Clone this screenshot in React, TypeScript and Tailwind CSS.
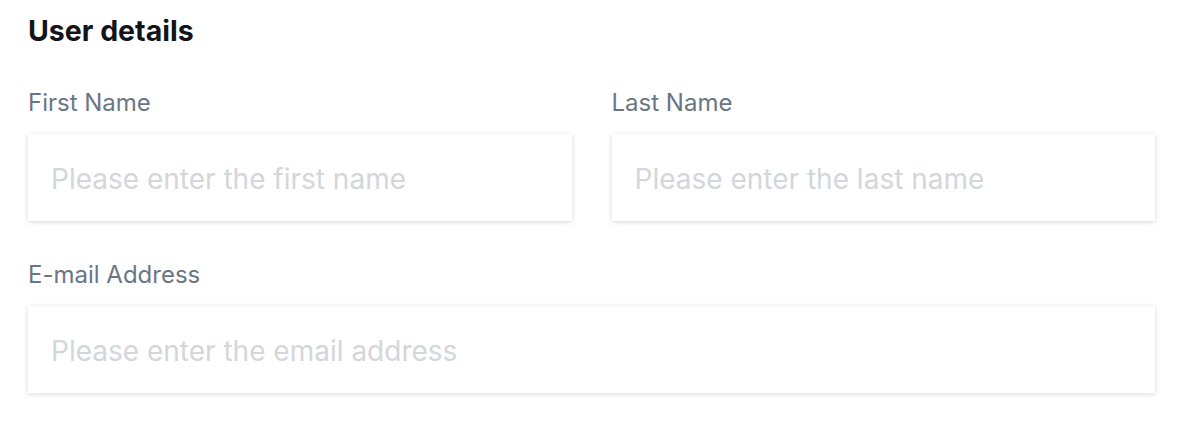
import React from 'react';

interface FieldProps {
  label: string;
  placeholder: string;
  type?: string;
}

const Field: React.FC<FieldProps> = ({ label, placeholder, type = 'text' }) => (
  <label className="flex flex-col">
    <span className="text-[24px] leading-[28px] text-[#6b7684]">{label}</span>
    <input
      type={type}
      placeholder={placeholder}
      className="mt-[17px] h-[87px] w-full bg-white px-[23px] pt-[3px] text-[28px] text-gray-700 outline-none placeholder:text-[#d3d6db] shadow-[0_1px_5px_rgba(0,0,0,0.16)]"
    />
  </label>
);

export default function App() {
  return (
    <div
      className="min-h-[428px] w-[1188px] bg-white pl-[28px] pr-[33px] pt-[14px]"
      style={{ fontFamily: 'Inter, "Noto Sans", sans-serif' }}
    >
      <h2 className="text-[28.5px] font-bold leading-[34px] text-[#111418]">User details</h2>
      <div className="mt-[41px] grid grid-cols-2 gap-x-[40px]">
        <Field label="First Name" placeholder="Please enter the first name" />
        <Field label="Last Name" placeholder="Please enter the last name" />
      </div>
      <div className="mt-[40px]">
        <Field label="E-mail Address" placeholder="Please enter the email address" type="email" />
      </div>
    </div>
  );
}
